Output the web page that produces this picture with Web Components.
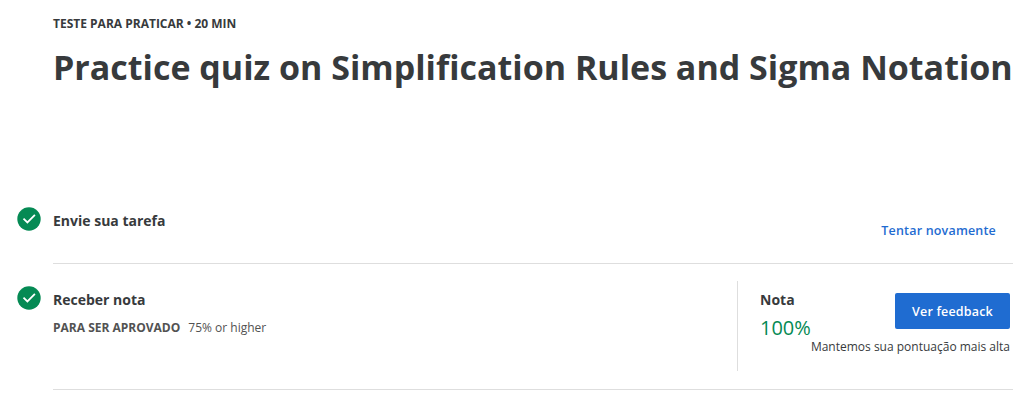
<!DOCTYPE html>
<html lang="pt-BR">
<head>
<meta charset="utf-8">
<title>Practice quiz</title>
<style>
body{margin:0;background:#fff;color:#373a3c;font-family:"Open Sans",sans-serif}
</style>
</head>
<body>
<quiz-page></quiz-page>
<script>
function define(name, html){
  const t=document.createElement('template');
  t.innerHTML=html;
  customElements.define(name,class extends HTMLElement{
    constructor(){super();this.attachShadow({mode:'open'}).append(t.content.cloneNode(true));}
  });
}
define('check-icon',`<style>:host{display:block;width:24px;height:24px}svg{display:block}</style>
<svg width="24" height="24" viewBox="0 0 24 24"><circle cx="12" cy="12" r="11.7" fill="#058a54"/><path d="M6.5 11.7l3.9 3.8 7.5-7.7" fill="none" stroke="#fff" stroke-width="1.8"/></svg>`);
define('quiz-header',`<style>:host{display:block;height:184px;padding:15px 0 0 53px;box-sizing:border-box;white-space:nowrap}
p{margin:0;font-size:12px;line-height:18px;font-weight:700}
h1{margin:10px 0 0;font-size:34px;line-height:48px;font-weight:700}</style>
<p><slot name="kind"></slot></p><h1><slot></slot></h1>`);
define('quiz-step',`<style>:host{display:flex;box-sizing:border-box}
check-icon{margin:var(--icon-top) 12px 0 17px;flex:none}
.body{flex:1;display:flex;justify-content:space-between;border-bottom:1px solid #dedede;margin-right:13px}
.text{padding-top:var(--text-top)}
h2{margin:0;font-size:14px;line-height:20px;font-weight:700}</style>
<check-icon></check-icon><div class="body"><div class="text"><h2><slot name="title"></slot></h2><slot></slot></div><slot name="side"></slot></div>`);
define('pass-rule',`<style>:host{display:flex;gap:8px;margin-top:9px;font-size:12px;line-height:18px;color:#525252}b{font-weight:700}</style><b><slot name="label"></slot></b><span><slot></slot></span>`);
define('text-action',`<style>:host{display:block;padding:37px 17px 0 0}button{all:unset;display:block;font-size:12.5px;line-height:20px;font-weight:600;letter-spacing:.18px;color:#1f6cd1;white-space:nowrap}</style><button><slot></slot></button>`);
define('grade-panel',`<style>:host{display:flex;width:276px;height:90px;margin-top:17px;box-sizing:border-box;border-left:1px solid #dedede;padding:9px 3px 0 22px;white-space:nowrap}
.label{font-size:14px;line-height:20px;font-weight:700}
.score{font-size:20px;line-height:28px;margin-top:4px;color:#058a54}
.right{display:flex;flex-direction:column;align-items:flex-end;margin-left:auto;padding-top:3px}
button{all:unset;box-sizing:border-box;width:115px;height:36px;background:#1f6cd1;color:#fff;border-radius:2px;text-align:center;font-size:12.5px;font-weight:600;letter-spacing:.18px;line-height:38px}
.note{font-size:12px;line-height:18px;margin-top:9px}</style>
<div><div class="label"><slot name="label"></slot></div><div class="score"><slot name="score"></slot></div></div>
<div class="right"><button><slot name="action"></slot></button><div class="note"><slot name="note"></slot></div></div>`);
define('quiz-page',`<style>:host{display:block;height:401px;overflow:hidden}
.one{height:80px;--icon-top:23px;--text-top:27px}.two{height:126px;--icon-top:22px;--text-top:26px}</style>
<quiz-header><span slot="kind">TESTE PARA PRATICAR • 20 MIN</span>Practice quiz on Simplification Rules and Sigma Notation</quiz-header>
<quiz-step class="one"><span slot="title">Envie sua tarefa</span><text-action slot="side">Tentar novamente</text-action></quiz-step>
<quiz-step class="two"><span slot="title">Receber nota</span><pass-rule><span slot="label">PARA SER APROVADO</span>75% or higher</pass-rule>
<grade-panel slot="side"><span slot="label">Nota</span><span slot="score">100%</span><span slot="action">Ver feedback</span><span slot="note">Mantemos sua pontuação mais alta</span></grade-panel></quiz-step>`);
</script>
</body>
</html>
